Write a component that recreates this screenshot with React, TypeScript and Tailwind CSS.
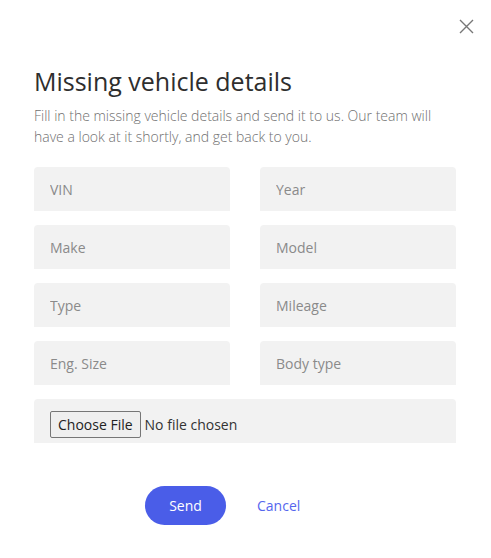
const fields = [
  ["VIN", "Year"],
  ["Make", "Model"],
  ["Type", "Mileage"],
  ["Eng. Size", "Body type"],
];

function Field({ label }: { label: string }) {
  return (
    <input
      placeholder={label}
      className="h-[44px] w-full rounded-t-[4px] bg-[#f2f2f2] px-4 text-[14px] text-[#555] placeholder:text-[#8a8a8a] outline-none"
    />
  );
}

export default function App() {
  return (
    <div className="relative min-h-[558px] w-[491px] bg-white font-['Open_Sans',sans-serif]">
      <button className="absolute right-[17px] top-[19px] text-[#777]" aria-label="Close">
        <svg width="15" height="15" viewBox="0 0 15 15" fill="none" stroke="currentColor" strokeWidth="1.4">
          <path d="M1 1L14 14M14 1L1 14" />
        </svg>
      </button>
      <div className="pl-[34px] pr-[35px] pt-[64px]">
        <h2 className="text-[25px] leading-[34px] font-medium text-[#2e2e2e]">Missing vehicle details</h2>
        <p className="mt-[7px] text-[14px] leading-[21px] font-light text-[#707070]">
          Fill in the missing vehicle details and send it to us. Our team will have a look at it shortly, and get back to you.
        </p>
        <div className="mt-[20px] flex flex-col gap-[14px]">
          {fields.map((row, i) => (
            <div key={i} className="grid grid-cols-2 gap-[30px]">
              <Field label={row[0]} />
              <Field label={row[1]} />
            </div>
          ))}
          <div className="flex h-[44px] items-start rounded-t-[4px] bg-[#f2f2f2] px-4 pt-[12px]">
            <input
              type="file"
              className="text-[14px] text-[#333] file:mr-[4px] file:h-[27px] file:rounded-[2px] file:border file:border-[#767676] file:bg-[#efefef] file:px-[7px] file:text-[#222]"
            />
          </div>
        </div>
        <div className="mt-[43px] flex items-center gap-[31px] pl-[111px]">
          <button className="h-[39px] w-[81px] rounded-full bg-[#4a5de8] text-[14px] text-white">Send</button>
          <button className="text-[14px] text-[#5566ee]">Cancel</button>
        </div>
      </div>
    </div>
  );
}
